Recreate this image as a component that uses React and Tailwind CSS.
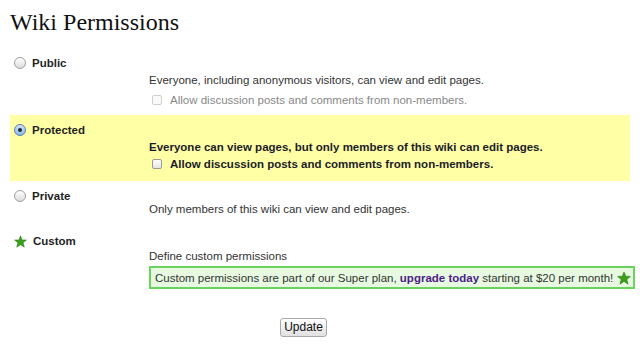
import React, { useState } from 'react';

const Star = ({ className }) => (
  <svg viewBox="0 0 24 24" className={className}>
    <polygon
      points="12,1.5 15,9 23,9.3 16.8,14.4 19,22.5 12,17.8 5,22.5 7.2,14.4 1,9.3 9,9"
      fill="#3c9e1c"
      stroke="#2a7a12"
      strokeWidth="1"
      strokeLinejoin="round"
    />
  </svg>
);

const Radio = ({ checked, onClick }) => (
  <span
    onClick={onClick}
    className={`flex h-[12px] w-[12px] shrink-0 items-center justify-center rounded-full border cursor-pointer ${
      checked
        ? 'border-[#5a7fb0] bg-gradient-to-b from-[#cfe3f7] to-[#8db8e8]'
        : 'border-[#a0a0a0] bg-gradient-to-b from-[#ffffff] to-[#dcdcdc]'
    }`}
  >
    {checked && <span className="h-[4px] w-[4px] rounded-full bg-[#1d2a3a]" />}
  </span>
);

const Checkbox = ({ disabled }) => (
  <span
    className={`block h-[10px] w-[10px] shrink-0 rounded-[2px] border ${
      disabled ? 'border-[#cfcfcf] bg-[#fafafa]' : 'border-[#9a9a9a] bg-gradient-to-b from-[#ffffff] to-[#e4e4e4]'
    }`}
  />
);

const App = () => {
  const [mode, setMode] = useState('protected');

  const options = [
    {
      id: 'public',
      label: 'Public',
      text: 'Everyone, including anonymous visitors, can view and edit pages.',
      check: true
    },
    {
      id: 'protected',
      label: 'Protected',
      text: 'Everyone can view pages, but only members of this wiki can edit pages.',
      check: true
    },
    {
      id: 'private',
      label: 'Private',
      text: 'Only members of this wiki can view and edit pages.',
      check: false
    }
  ];

  return (
    <div className="min-h-[345px] bg-white px-[10px] pt-[8px] font-['Liberation_Sans',Arial,sans-serif] text-[11.5px] leading-[14px] text-[#2a2a2a]">
      <h1 className="font-['Liberation_Serif','Times_New_Roman',serif] text-[24px] leading-[28px] text-[#111]">
        Wiki Permissions
      </h1>

      <div className="mt-[12px]">
        {options.map((opt) => {
          const active = mode === opt.id;
          return (
            <div
              key={opt.id}
              className={`pl-[4px] ${active ? 'bg-[#ffffa6] pb-[10px] pt-[8px]' : 'pt-[8px] pb-[8px]'}`}
            >
              <label className="flex items-center gap-[6px]" onClick={() => setMode(opt.id)}>
                <Radio checked={active} />
                <span className="font-bold text-[#1f1f1f]">{opt.label}</span>
              </label>
              <div className={`ml-[135px] ${opt.check ? 'mt-[3px]' : '-mt-[1px]'}`}>
                <p className={active ? 'font-bold text-[#1c1c28]' : 'text-[#333]'}>{opt.text}</p>
                {opt.check && (
                  <div className={`flex items-center gap-[8px] pl-[3px] ${active ? 'mt-[3px]' : 'mt-[6px]'}`}>
                    <Checkbox disabled={!active} />
                    <span className={active ? 'font-bold text-[#1c1c28]' : 'text-[#888]'}>
                      Allow discussion posts and comments from non-members.
                    </span>
                  </div>
                )}
              </div>
            </div>
          );
        })}

        <div className="mt-[10px] pl-[4px]">
          <div className="flex items-center gap-[6px]">
            <Star className="h-[13px] w-[13px]" />
            <span className="font-bold text-[#1f1f1f]">Custom</span>
          </div>
          <div className="ml-[135px] mt-[1px]">
            <p className="text-[#333]">Define custom permissions</p>
            <div className="mt-[3px] flex h-[23px] w-[486px] items-center border-2 border-[#6ad35e] bg-[#e7fae1] pl-[4px] pr-[2px] text-[#333]">
              <span className="flex-1 whitespace-nowrap">
                Custom permissions are part of our Super plan,{' '}
                <a className="font-bold text-[#4e1a8a]">upgrade today</a> starting at $20 per month!
              </span>
              <Star className="h-[14px] w-[14px] shrink-0" />
            </div>
          </div>
        </div>

        <div className="mt-[29px] pl-[270px]">
          <button className="h-[19px] w-[47px] rounded-[3px] border border-[#a9a9a9] bg-gradient-to-b from-[#ffffff] to-[#e1e1e1] text-[12px] leading-[17px] text-[#111]">
            Update
          </button>
        </div>
      </div>
    </div>
  );
};

export default App;
